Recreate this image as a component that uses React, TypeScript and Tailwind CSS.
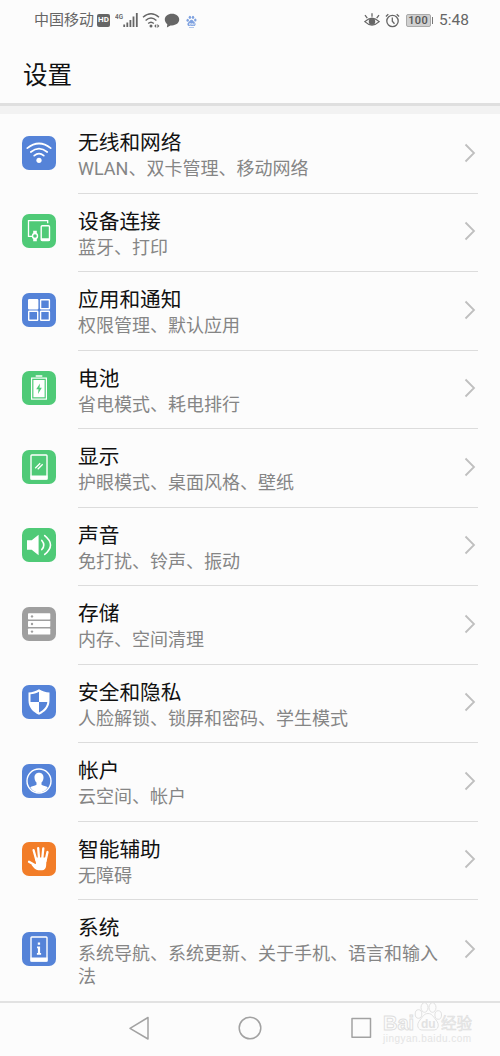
import type { ReactNode } from "react";

type Item = {
  title: string;
  desc: string;
  color: string;
  icon: ReactNode;
};

const blue = "bg-[#5583d8]";
const green = "bg-[#4fca77]";

const items: Item[] = [
  {
    title: "无线和网络",
    desc: "WLAN、双卡管理、移动网络",
    color: blue,
    icon: (
      <>
        <g fill="none" stroke="#fff" strokeWidth="1.7" strokeLinecap="round">
          <path d="M5.3 12.2Q17 2.8 28.7 12.2" />
          <path d="M8.8 16Q17 9.2 25.2 16" />
          <path d="M12.2 19.6Q17 15.6 21.8 19.6" />
        </g>
        <circle cx="17" cy="24.3" r="2.6" fill="#fff" />
      </>
    ),
  },
  {
    title: "设备连接",
    desc: "蓝牙、打印",
    color: green,
    icon: (
      <>
        <path d="M10.3 22.3H6.5V6.6H25.7V9.2" fill="none" stroke="#fff" strokeWidth="1.3" />
        <rect x="19.2" y="11.7" width="8.3" height="14.8" rx="1" fill="none" stroke="#fff" strokeWidth="1.4" />
        <path d="M19 24.2h9v2.6h-9z" fill="#fff" />
        <path d="M11.2 16.8h3.6v3h-3.6zM11.2 24h3.6v3.2h-3.6z" fill="#fff" />
        <circle cx="13" cy="22" r="2.5" fill="#4fca77" stroke="#fff" strokeWidth="1.4" />
      </>
    ),
  },
  {
    title: "应用和通知",
    desc: "权限管理、默认应用",
    color: blue,
    icon: (
      <g fill="none" stroke="#fff" strokeWidth="1.4">
        <rect x="6.7" y="6.7" width="9" height="9" rx="0.5" fill="#fff" />
        <rect x="18.6" y="6.7" width="8.8" height="9" rx="0.5" />
        <rect x="6.7" y="18.3" width="9" height="9" rx="0.5" />
        <rect x="18.6" y="18.3" width="8.8" height="9" rx="0.5" />
      </g>
    ),
  },
  {
    title: "电池",
    desc: "省电模式、耗电排行",
    color: green,
    icon: (
      <>
        <path d="M13.7 4.2h6.6v1.5h-6.6z" fill="#fff" />
        <rect x="9.6" y="7.1" width="14.8" height="21" fill="none" stroke="#fff" strokeWidth="1.2" />
        <path d="M11.4 8.9h11.2v17.4H11.4z" fill="#fff" />
        <path d="M18 12.5 14.2 18.2h2.3l-.5 4.8 3.8-6.2h-2.3z" fill="#4fca77" />
      </>
    ),
  },
  {
    title: "显示",
    desc: "护眼模式、桌面风格、壁纸",
    color: green,
    icon: (
      <>
        <rect x="9" y="5" width="16" height="24" rx="0.8" fill="none" stroke="#fff" strokeWidth="1.4" />
        <path d="M8.5 25.6h17v4h-17z" fill="#fff" />
        <path d="M13.2 18.2l5-5M15.7 19.3l5-5" stroke="#fff" strokeWidth="1.3" />
      </>
    ),
  },
  {
    title: "声音",
    desc: "免打扰、铃声、振动",
    color: green,
    icon: (
      <>
        <path d="M5 12.2h4.7L16.6 6.7v20.6l-6.9-5.5H5z" fill="#fff" />
        <g fill="none" stroke="#fff" strokeWidth="1.6" strokeLinecap="round">
          <path d="M19.8 12.4q4 4.6 0 9.2" />
          <path d="M22.7 7.6q11.6 9.4 0 18.8" />
        </g>
      </>
    ),
  },
  {
    title: "存储",
    desc: "内存、空间清理",
    color: "bg-[#9f9f9f]",
    icon: (
      <>
        <g fill="#fff">
          <rect x="6" y="6.3" width="22.3" height="6.1" rx="0.7" />
          <rect x="6" y="13.9" width="22.3" height="6.1" rx="0.7" />
          <rect x="6" y="21.5" width="22.3" height="6.1" rx="0.7" />
        </g>
        <g fill="#9f9f9f">
          <circle cx="10" cy="9.4" r="1.2" />
          <circle cx="10" cy="17" r="1.2" />
          <circle cx="10" cy="24.6" r="1.2" />
        </g>
      </>
    ),
  },
  {
    title: "安全和隐私",
    desc: "人脸解锁、锁屏和密码、学生模式",
    color: blue,
    icon: (
      <>
        <path
          d="M17 4.2C20 6.3 23.8 7.2 27.5 7.5V15.5C27.5 22.5 23 27 17 29.8 11 27 6.5 22.5 6.5 15.5V7.5C10.2 7.2 14 6.3 17 4.2z"
          fill="#fff"
        />
        <path d="M17 6.8V17H8.5V9.2C11.5 9 14.5 8.2 17 6.8zM17 17h8.3c-.5 4.5-3.5 8-8.3 10.4z" fill="#5583d8" />
      </>
    ),
  },
  {
    title: "帐户",
    desc: "云空间、帐户",
    color: blue,
    icon: (
      <>
        <circle cx="17" cy="17" r="12" fill="none" stroke="#fff" strokeWidth="1.4" />
        <path
          d="M17 8.8c3 0 4.7 2.2 4.5 5-.1 2.2-.9 3.7-2 4.8v2.2c1.8 1.1 4.5 1.5 6.3 2.5C23.8 26.7 20.5 28.5 17 28.5s-6.8-1.8-8.8-5.2c1.8-1 4.5-1.4 6.3-2.5v-2.2c-1.1-1.1-1.9-2.6-2-4.8-.2-2.8 1.5-5 4.5-5z"
          fill="#fff"
        />
      </>
    ),
  },
  {
    title: "智能辅助",
    desc: "无障碍",
    color: "bg-[#f27d28]",
    icon: (
      <>
        <g fill="none" stroke="#fff" strokeWidth="2.3" strokeLinecap="round">
          <path d="M11.6 8.2l2.8 10" />
          <path d="M16.2 6.2l.9 11" />
          <path d="M21.3 6.4l-1.1 11" />
          <path d="M25.5 10l-2 9" />
          <path d="M7 19.8l7 4" />
        </g>
        <path d="M13 15.5h11.6l-.5 8.5c-.3 2.7-1.6 4.2-4 4.2h-3.7c-2.8 0-4.5-2.2-7-5.5l4.7-1z" fill="#fff" />
      </>
    ),
  },
  {
    title: "系统",
    desc: "系统导航、系统更新、关于手机、语言和输入法",
    color: blue,
    icon: (
      <>
        <rect x="9" y="5" width="16" height="24" rx="0.8" fill="none" stroke="#fff" strokeWidth="1.4" />
        <path d="M8.5 25.6h17v4h-17z" fill="#fff" />
        <path d="M15.8 10.4h2.3v2.3h-2.3zM15 14.6h3.1v6.5h1v1.7h-4.2v-1.7h1v-4.8H15z" fill="#fff" />
      </>
    ),
  },
];

function StatusBar() {
  return (
    <div className="flex h-10 items-center justify-between pl-[34px] pr-[31px] text-[#666]">
      <div className="flex items-center">
        <span className="text-[15px] leading-5">中国移动</span>
        <span className="ml-[3px] flex h-[13px] w-[13px] items-center justify-center rounded-[2px] bg-[#666] text-[8px] font-bold leading-none text-white">
          HD
        </span>
        <svg className="ml-[5px]" width="24" height="18" viewBox="0 0 24 18" fill="#666">
          <text x="0" y="8" fontSize="8" fontWeight="600" textLength="8" lengthAdjust="spacingAndGlyphs">4G</text>
          <path d="M8.3 13.5h1.8v2.5h-1.8zM11.4 11.5h1.8v4.5h-1.8zM14.5 9h1.8v7h-1.8zM17.6 5.5h1.8v10.5h-1.8zM20.9 2h1.8v14h-1.8z" />
        </svg>
        <svg className="ml-[3px]" width="19" height="17" viewBox="0 0 19 17">
          <g fill="none" stroke="#666" strokeWidth="1.4">
            <path d="M1 5.3Q9 -1.8 17 5.3" />
            <path d="M3.6 8.5Q9 3.5 14.4 8.5" />
            <path d="M6.2 11.5Q9 8.8 11.8 11.5" />
          </g>
          <circle cx="9" cy="14" r="1.5" fill="#666" />
          <path d="M14.2 12v4l-2-2zM15.4 12v4l2-2z" fill="#666" />
        </svg>
        <svg className="ml-[3px]" width="16" height="15" viewBox="0 0 16 15" fill="#666">
          <path d="M8 .8c4.2 0 7.2 2.4 7.2 5.8S12.2 12.4 8 12.4H6.5L2.9 14.6 3.3 11.2C1.7 10.1.8 8.5.8 6.6.8 3.2 3.8.8 8 .8z" />
        </svg>
        <svg className="ml-[6px] mt-[2px]" width="11" height="13" viewBox="0 0 11 13" fill="#7fa2e0">
          <ellipse cx="1.7" cy="5.2" rx="1.2" ry="1.5" />
          <ellipse cx="3.9" cy="2.3" rx="1.2" ry="1.6" />
          <ellipse cx="7" cy="2.3" rx="1.2" ry="1.6" />
          <ellipse cx="9.3" cy="5" rx="1.2" ry="1.5" />
          <path d="M5.5 4.8c1.5 0 2 1.5 3 2.5 2 1.8 1 4-1 3.8H3.5c-2 .2-3-2-1-3.8 1-1 1.5-2.5 3-2.5z" />
          <path d="M3.5 8.5h1.8v1.5H3.5zM6.5 8v1.8h1.6V8" fill="none" stroke="#fff" strokeWidth="0.6" />
          <path d="M3 12.2h5v.6H3z" />
        </svg>
      </div>
      <div className="flex items-center">
        <svg width="16" height="14" viewBox="0 0 16 14" fill="none" stroke="#666" strokeWidth="1.3">
          <path d="M.8 8.6Q8 1.8 15.2 8.6 8 15.4.8 8.6z" />
          <circle cx="8" cy="8.5" r="2.6" fill="#666" />
          <path d="M8 .2v3.5M1 2.2l2.3 2.9M15 2.2l-2.3 2.9" />
        </svg>
        <svg className="ml-[5px]" width="15" height="15" viewBox="0 0 15 15" fill="none" stroke="#666" strokeWidth="1.3">
          <circle cx="7.5" cy="8" r="5.7" />
          <path d="M7.3 4.6V8.2l2.2 2.5M.9 3.4L3.3 1.2M14.1 3.4L11.7 1.2" />
        </svg>
        <span className="ml-[6px] flex h-[13px] w-[25px] items-center justify-center rounded-[2px] border border-[#aaa] bg-[#d0d0d0] text-[11px] font-medium leading-none tracking-[0.3px] text-[#555]">
          100
        </span>
        <span className="ml-px h-[7px] w-[1.5px] bg-[#777]" />
        <span className="ml-[6px] text-[15.5px] leading-5">5:48</span>
      </div>
    </div>
  );
}

function Row({ item, last }: { item: Item; last: boolean }) {
  return (
    <div className={`flex px-[22px] ${last ? "h-[100.5px]" : "h-[78.5px]"}`}>
      <div className="flex items-center pb-[3px]">
        <div className={`h-[34px] w-[34px] overflow-hidden rounded-[7px] ${item.color}`}>
          <svg width="34" height="34" viewBox="0 0 34 34">{item.icon}</svg>
        </div>
      </div>
      <div className={`ml-[22px] flex flex-1 items-center ${last ? "" : "border-b border-[#dcdcdc]"}`}>
        <div className="h-full flex-1 pt-[15px]">
          <div className="text-[20.7px] leading-[27px] text-[#111]">{item.title}</div>
          <div className="w-[364px] text-[18px] leading-[23px] text-[#858585]">{item.desc}</div>
        </div>
        <svg className="mb-[2px] mr-[2px]" width="12" height="20" viewBox="0 0 12 20" fill="none" stroke="#bfbfbf" strokeWidth="1.8">
          <path d="M1.5 1.5L10 10l-8.5 8.5" />
        </svg>
      </div>
    </div>
  );
}

function Watermark() {
  return (
    <svg className="absolute right-[24px] top-[-2px]" width="95" height="46" viewBox="0 0 95 46">
      <g fill="#fcfcfc" stroke="#dedede" strokeWidth="0.9">
        <text x="2" y="29" fontSize="20" fontWeight="700" fontFamily="'Liberation Sans', sans-serif">
          Bai
        </text>
        <text x="60" y="28" fontSize="15.5" strokeWidth="0.5" fill="#ececec" fontFamily="'Noto Sans CJK SC', sans-serif">
          经验
        </text>
        <ellipse cx="37.5" cy="13" rx="3.3" ry="4.3" />
        <ellipse cx="43.5" cy="6.5" rx="3.5" ry="4.8" />
        <ellipse cx="51.5" cy="6.5" rx="3.5" ry="4.8" />
        <ellipse cx="57.2" cy="14" rx="3.3" ry="4.3" />
        <path d="M47 12.5c4 0 5.500 3.500 8 6.500 4 4.500 2.500 10.500-3 10H42c-5.500.5-7-5.500-3-10 2.500-3 4-6.500 8-6.500z" />
        <text x="40" y="26.5" fontSize="12" fill="#e2e2e2" stroke="none" fontWeight="700" fontFamily="'Liberation Sans', sans-serif">
          du
        </text>
      </g>
      <text x="2" y="41" fontSize="10" textLength="88" fill="#e4e4e4" fontFamily="'Liberation Sans', sans-serif">
        jingyan.baidu.com
      </text>
    </svg>
  );
}

function NavBar() {
  return (
    <div className="relative flex h-[56px] border-t-2 border-[#e2e2e2] pl-[128px]">
      <div className="flex h-[50px] items-center">
        <svg width="244" height="24" viewBox="0 0 244 24" fill="none" stroke="#a2a2a2" strokeWidth="1.5" strokeLinejoin="round">
          <path d="M2 12.3L20 1.5v21.5z" />
          <circle cx="122" cy="12" r="10.8" />
          <rect x="224" y="2.5" width="18.5" height="18.8" />
        </svg>
      </div>
      <Watermark />
    </div>
  );
}

export default function App() {
  return (
    <div className="h-[1056px] w-[500px] overflow-hidden bg-[#fcfcfc] font-[Roboto,'Noto_Sans_CJK_SC',sans-serif]">
      <StatusBar />
      <div className="flex h-[63px] items-center pl-[23px] pt-[8px] text-[24.5px] leading-9 text-[#111]">设置</div>
      <div className="mb-[1px] h-[11px] border-t-[3px] border-[#dfdfdf] bg-[#f2f2f2]" />
      {items.map((item, i) => (
        <Row key={item.title} item={item} last={i === items.length - 1} />
      ))}
      <NavBar />
    </div>
  );
}
